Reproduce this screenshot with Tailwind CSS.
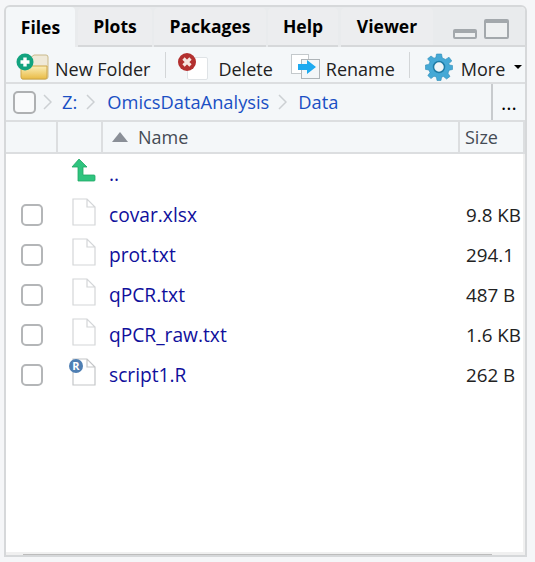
<!DOCTYPE html>
<html lang="en">

<head>
    <meta charset="UTF-8" />
    <title>Files</title>
    <script src="https://cdn.jsdelivr.net/npm/@tailwindcss/browser@4"></script>
</head>

<body class="bg-[#f5f6f8] font-['Open_Sans','Noto_Sans',sans-serif] w-[535px] h-[562px] overflow-hidden">
    <div class="ml-1 mt-[5px] w-[523px] h-[552px] border-2 border-[#d6d8da] rounded-t-md bg-white flex flex-col overflow-hidden relative">
        <!-- Tabs -->
        <div class="h-[40px] bg-[#e9ebed] flex items-end shrink-0 relative">
            <div class="w-[69px] h-[40px] bg-[#f4f7f9] rounded-t-sm flex items-center justify-center text-[17.5px] font-bold text-black">Files</div>
            <div class="ml-[3px] w-[74px] h-[39px] bg-[#ecedef] border-b-2 border-[#d6d8da] rounded-t-sm flex items-center justify-center text-[17.5px] font-bold text-black">Plots</div>
            <div class="ml-[2px] w-[112px] h-[39px] bg-[#ecedef] border-b-2 border-[#d6d8da] rounded-t-sm flex items-center justify-center text-[17.5px] font-bold text-black">Packages</div>
            <div class="ml-[2px] w-[70px] h-[39px] bg-[#ecedef] border-b-2 border-[#d6d8da] rounded-t-sm flex items-center justify-center text-[17.5px] font-bold text-black">Help</div>
            <div class="ml-[3px] w-[92px] h-[39px] bg-[#ecedef] border-b-2 border-[#d6d8da] rounded-t-sm flex items-center justify-center text-[17.5px] font-bold text-black">Viewer</div>
            <div class="flex-1 h-full border-b-2 border-[#d6d8da] flex items-start pl-[20px] pt-[12px] gap-[7px]">
                <div class="w-[24px] h-[10px] mt-[10px] border-2 border-[#a3a8ac] border-t-[4px] rounded-[2px] bg-[#eef0f1]"></div>
                <div class="w-[25px] h-[20px] border-2 border-[#a3a8ac] border-t-[4px] rounded-[2px] bg-[#eef0f1]"></div>
            </div>
        </div>

        <!-- Toolbar -->
        <div class="h-[37px] pt-[4px] bg-[#f4f7f9] border-b-2 border-[#dcdee0] flex items-center text-[18px] text-[#222] shrink-0">
            <svg class="ml-[10px] w-[33px] h-[28px] shrink-0" viewBox="0 0 33 28">
                <defs>
                    <linearGradient id="folder" x1="0" y1="0" x2="0" y2="1">
                        <stop offset="0" stop-color="#fbeeb8" />
                        <stop offset="1" stop-color="#e9bb45" />
                    </linearGradient>
                </defs>
                <path d="M14 5 L18 2 H30 Q32 2 32 4 V24 Q32 26 30 26 H6 L6 14 Z" fill="#efe9d8" stroke="#c9b98a" />
                <path d="M5 13 H31 V24 Q31 26 29 26 H7 Q5 26 5 24 Z" fill="url(#folder)" stroke="#cfa748" />
                <circle cx="9" cy="9" r="8.5" fill="#12a37f" />
                <path d="M9 4.5 V13.5 M4.5 9 H13.5" stroke="#fff" stroke-width="3.4" />
            </svg>
            <span class="ml-[6px] mt-[6px]">New Folder</span>
            <div class="ml-[15px] -mt-[4px] w-px h-[26px] bg-[#d3d6d8]"></div>
            <svg class="ml-[12px] w-[31px] h-[28px] shrink-0" viewBox="0 0 31 28">
                <rect x="9.5" y="4.5" width="20" height="22" rx="1.5" fill="#fff" stroke="#dfe3e6" />
                <circle cx="9" cy="9" r="9" fill="#b3302f" />
                <path d="M5.5 5.5 L12.5 12.5 M12.5 5.5 L5.5 12.5" stroke="#f6e6e0" stroke-width="3.2" />
            </svg>
            <span class="ml-[9px] mt-[6px]">Delete</span>
            <svg class="ml-[18px] w-[29px] h-[25px] shrink-0" viewBox="0 0 29 25">
                <rect x="0.5" y="0.5" width="17" height="19" fill="#fff" stroke="#c4c9cc" />
                <rect x="10.5" y="5.5" width="18" height="19" fill="#f3f6f8" stroke="#aeb4b8" />
                <path d="M7 10 H16 V6 L25 13 L16 20 V16 H7 Z" fill="#1eaaf0" />
            </svg>
            <span class="ml-[6px] mt-[6px]">Rename</span>
            <div class="ml-[14px] -mt-[4px] w-px h-[26px] bg-[#d3d6d8]"></div>
            <svg class="ml-[15px] w-[28px] h-[28px] shrink-0" viewBox="0 0 28 28">
                <path d="M11.5 1 H16.5 L17.3 5 L20.6 6.4 L24 4.2 L26.8 8 L23.8 10.6 L24.4 12 L27.5 12.5 V16.5 L24.2 17.2 L23 20.2 L25 23.4 L21.6 26 L18.6 23.6 L16.6 24 L16 27.5 H12 L11.4 24 L9 23.2 L6 25.6 L2.8 22.6 L5 19.6 L3.8 17 L0.5 16.4 V12 L3.8 11.4 L5 8.8 L2.6 5.8 L6 3 L9 5.2 L10.8 4.6 Z" fill="#45a9d6" stroke="#2d8db9" stroke-width="0.6" />
                <circle cx="14" cy="14" r="5.5" fill="#eef5f7" stroke="#1e7ca6" stroke-width="1.5" />
            </svg>
            <span class="ml-[8px] mt-[6px]">More</span>
            <div class="ml-[9px] w-0 h-0 border-x-[4px] border-x-transparent border-t-[4px] border-t-black"></div>
        </div>

        <!-- Path bar -->
        <div class="h-[38px] bg-[#f4f7f9] border-b-2 border-[#dcdee0] flex items-center text-[18.3px] text-[#1a4fc4] shrink-0">
            <div class="ml-[7px] w-[23px] h-[23px] border-2 border-[#aeb0b2] rounded-[5px] bg-[#f9fafb]"></div>
            <svg class="ml-[7px] w-[9px] h-[16px]" viewBox="0 0 9 16"><path d="M1 1 L8 8 L1 15" fill="none" stroke="#ccd0d3" stroke-width="1.5" /></svg>
            <span class="ml-[10px]">Z:</span>
            <svg class="ml-[9px] w-[9px] h-[16px]" viewBox="0 0 9 16"><path d="M1 1 L8 8 L1 15" fill="none" stroke="#ccd0d3" stroke-width="1.5" /></svg>
            <span class="ml-[12px]">OmicsDataAnalysis</span>
            <svg class="ml-[9px] w-[9px] h-[16px]" viewBox="0 0 9 16"><path d="M1 1 L8 8 L1 15" fill="none" stroke="#ccd0d3" stroke-width="1.5" /></svg>
            <span class="ml-[11px]">Data</span>
            <div class="ml-auto w-[34px] h-full border-l-2 border-[#c8cbce] flex items-end justify-center pb-[7px] text-[20px] leading-none text-black">...</div>
        </div>

        <!-- Table header -->
        <div class="h-[32px] bg-[#f4f7f9] border-b-2 border-[#dcdee0] flex items-center text-[18px] text-[#444b55] shrink-0">
            <div class="w-[52px] h-full border-r-2 border-[#dcdee0] shrink-0"></div>
            <div class="w-[45px] h-full border-r-2 border-[#dcdee0] shrink-0"></div>
            <div class="w-[357px] h-full border-r-2 border-[#dcdee0] flex items-center shrink-0">
                <div class="ml-[9px] w-0 h-0 border-x-[8px] border-x-transparent border-b-[10px] border-b-[#8a8f97]"></div>
                <span class="ml-[10px] mt-[1px]">Name</span>
            </div>
            <div class="flex-1 h-full pl-[5px] pt-[1px] flex items-center border-r-2 border-[#dcdee0]">Size</div>
        </div>

        <!-- File rows -->
        <div class="flex-1 bg-white text-[19.2px] text-[#10109c] border-r-2 border-[#f0f0f0]">
            <div class="h-[40px] flex items-center">
                <div class="w-[52px] shrink-0"></div>
                <svg class="ml-[13px] -mt-[8px] w-[25px] h-[24px] shrink-0" viewBox="0 0 25 24">
                    <path d="M8 1 L16 9 H12 V17 H23 Q24 17 24 18 V22 Q24 23 23 23 H7 V9 H1 Z" fill="#2fc47f" stroke="#20a866" stroke-width="0.8" />
                </svg>
                <span class="ml-[13px]">..</span>
            </div>
            <div class="h-[40px] mt-[1px] flex items-center">
                <div class="ml-[15px] w-[22px] h-[22px] border-2 border-[#b4b6b8] rounded-[5px] bg-white shrink-0"></div>
                <svg class="ml-[29px] w-[24px] h-[28px] shrink-0 -mt-[6px]" viewBox="0 0 24 28"><path d="M1 1 H15 L23 9 V27 H1 Z M15 1 V9 H23" fill="#fff" stroke="#d4d6d8" stroke-width="1.2" /></svg>
                <span class="ml-[13px]">covar.xlsx</span>
                <span class="ml-auto w-[57px] shrink-0 text-[18.8px] whitespace-nowrap text-[#222]">9.8 KB</span>
            </div>
            <div class="h-[40px] flex items-center">
                <div class="ml-[15px] w-[22px] h-[22px] border-2 border-[#b4b6b8] rounded-[5px] bg-white shrink-0"></div>
                <svg class="ml-[29px] w-[24px] h-[28px] shrink-0 -mt-[6px]" viewBox="0 0 24 28"><path d="M1 1 H15 L23 9 V27 H1 Z M15 1 V9 H23" fill="#fff" stroke="#d4d6d8" stroke-width="1.2" /></svg>
                <span class="ml-[13px]">prot.txt</span>
                <span class="ml-auto w-[57px] shrink-0 text-[18.8px] whitespace-nowrap text-[#222]">294.1</span>
            </div>
            <div class="h-[40px] flex items-center">
                <div class="ml-[15px] w-[22px] h-[22px] border-2 border-[#b4b6b8] rounded-[5px] bg-white shrink-0"></div>
                <svg class="ml-[29px] w-[24px] h-[28px] shrink-0 -mt-[6px]" viewBox="0 0 24 28"><path d="M1 1 H15 L23 9 V27 H1 Z M15 1 V9 H23" fill="#fff" stroke="#d4d6d8" stroke-width="1.2" /></svg>
                <span class="ml-[13px]">qPCR.txt</span>
                <span class="ml-auto w-[57px] shrink-0 text-[18.8px] whitespace-nowrap text-[#222]">487 B</span>
            </div>
            <div class="h-[40px] flex items-center">
                <div class="ml-[15px] w-[22px] h-[22px] border-2 border-[#b4b6b8] rounded-[5px] bg-white shrink-0"></div>
                <svg class="ml-[29px] w-[24px] h-[28px] shrink-0 -mt-[6px]" viewBox="0 0 24 28"><path d="M1 1 H15 L23 9 V27 H1 Z M15 1 V9 H23" fill="#fff" stroke="#d4d6d8" stroke-width="1.2" /></svg>
                <span class="ml-[13px]">qPCR_raw.txt</span>
                <span class="ml-auto w-[57px] shrink-0 text-[18.8px] whitespace-nowrap text-[#222]">1.6 KB</span>
            </div>
            <div class="h-[40px] flex items-center">
                <div class="ml-[15px] w-[22px] h-[22px] border-2 border-[#b4b6b8] rounded-[5px] bg-white shrink-0"></div>
                <svg class="ml-[26px] w-[27px] h-[28px] shrink-0 -mt-[6px]" viewBox="0 0 27 28">
                    <path d="M4 1 H18 L26 9 V27 H4 Z M18 1 V9 H26" fill="#fff" stroke="#c4c6c8" stroke-width="1.2" />
                    <circle cx="7" cy="8" r="7" fill="#4f7fb3" />
                    <text x="7" y="12" font-size="11" font-weight="700" text-anchor="middle" fill="#fff">R</text>
                </svg>
                <span class="ml-[13px]">script1.R</span>
                <span class="ml-auto w-[57px] shrink-0 text-[18.8px] whitespace-nowrap text-[#222]">262 B</span>
            </div>
        </div>

        <!-- Horizontal scrollbar -->
        <div class="absolute left-0 right-0 bottom-0 h-[3px] bg-[#f0f0f0]">
            <div class="absolute left-[17px] w-[469px] bottom-0 h-[1px] bg-[#bcbcbc]"></div>
        </div>
    </div>
</body>

</html>
